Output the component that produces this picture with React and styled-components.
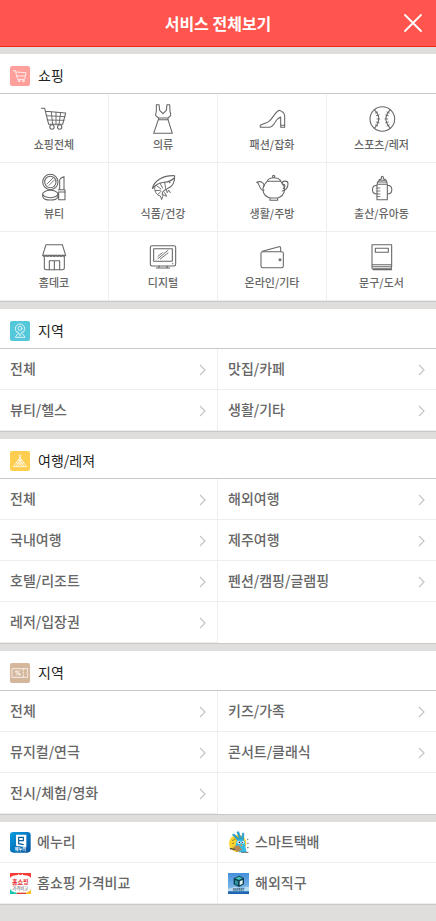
import React from "react";
import styled, { createGlobalStyle } from "styled-components";

const GlobalStyle = createGlobalStyle`
  * { box-sizing: border-box; }
  body {
    margin: 0;
    background: #dfdedc;
    color: #666;
    font-family: "Noto Sans CJK KR", "Noto Sans", sans-serif;
    font-size: 14px;
    font-weight: 500;
  }
  ul { list-style: none; margin: 0; padding: 0; }
  a { color: inherit; text-decoration: none; }
  svg { display: block; flex: none; overflow: visible; }
`;

const Header = styled.header`
  display: grid;
  grid-template-columns: 46px 1fr 46px;
  height: 47px;
  background: #ff554e;
  border-bottom: 1px solid #f0281e;
`;

const Title = styled.h1`
  grid-column: 2;
  margin: 0;
  font-size: 16px;
  line-height: 46px;
  font-weight: 700;
  color: #fff;
  text-align: center;
`;

const CloseButton = styled.button`
  display: flex;
  align-items: center;
  justify-content: center;
  border: 0;
  padding: 0;
  background: none;
  cursor: pointer;
`;

const Sections = styled.main`
  display: flex;
  flex-direction: column;
  gap: 7px;
  padding: 7px 0 16px;
`;

const Section = styled.section`
  background: #fff;
  border-bottom: 1px solid #c9c8c7;
`;

const SectionHead = styled.div`
  display: flex;
  align-items: flex-start;
  gap: 8px;
  padding: 12px 10px 7px;
  border-bottom: 1px solid #c9c9c9;
`;

const SectionTitle = styled.h2`
  margin: 0;
  font-size: 14px;
  line-height: 18px;
  font-weight: 400;
  color: #222;
`;

const Badge = styled.span`
  width: 20px;
  height: 20px;
  border-radius: 2px;
  background: ${(p) => p.$color};
`;

const TileGrid = styled.ul`
  display: grid;
  grid-template-columns: repeat(4, 1fr);
`;

const TileItem = styled.li`
  border-bottom: 1px solid #eee;
  border-right: 1px solid #eee;
  &:nth-child(4n) { border-right: 0; }
`;

const TileLink = styled.a`
  display: flex;
  flex-direction: column;
  align-items: center;
  padding: 9px 0 8px;
  font-size: 11px;
  line-height: 19px;
`;

const LinkGrid = styled.ul`
  display: grid;
  grid-template-columns: repeat(2, 1fr);
`;

const LinkItem = styled.li`
  border-bottom: 1px solid #eee;
  &:nth-child(odd) { border-right: 1px solid #eee; }
`;

const RowLink = styled.a`
  display: flex;
  align-items: flex-start;
  justify-content: space-between;
  padding: 10px 11px 10px 10px;
  line-height: 18px;
`;

const RowArrow = styled.span`
  padding: 5px 0 3px;
`;

const AppLink = styled(RowLink)`
  justify-content: flex-start;
  gap: 6px;
  padding-bottom: 9px;
`;

const TileIcon = ({ children }) => (
  <svg width="30" height="32" viewBox="0 0 90 96" fill="none" stroke="#666" strokeWidth="3.2" strokeLinejoin="round" strokeLinecap="round" aria-hidden="true">
    {children}
  </svg>
);

const tileIcons = {
  cart: (
    <>
      <path d="M7 16h10l12 48h42l9-34-60-5" />
      <path d="M37 27l4 37M51 28v36M65 29l-5 35M22 38l56 3M25 51l50 1" strokeWidth="2.8" />
      <circle cx="39" cy="72" r="6.5" />
      <circle cx="62" cy="72" r="6.5" />
    </>
  ),
  dress: (
    <path d="M25 5h8l2 17 10 10 10-10 2-17h8l1 18c0 6 3 10 2 15l-8 7H32l-9-7c-1-5 2-9 2-15zM31 50h30M32 45v5M60 45v5M31 50L17 91h56L60 50" />
  ),
  shoe: (
    <path d="M10 67c12-6 19-7 25-11 11-7 17-26 31-34 10 3 16 7 17 16v35H71V42c-8 3-14 11-18 18-5 8-10 13-17 13H10zM71 67h11" />
  ),
  ball: (
    <>
      <circle cx="46" cy="48" r="37" />
      <path d="M22 20c17 18 17 38 0 56M70 20c-17 18-17 38 0 56" />
      <path d="M25 30l7-3M28 38l8-2M30 48h8M28 57l8 2M25 66l7 3M67 30l-7-3M64 38l-8-2M62 48h-8M64 57l-8 2M67 66l-7 3" strokeWidth="2.6" />
    </>
  ),
  beauty: (
    <>
      <circle cx="34" cy="30" r="23" />
      <circle cx="34" cy="30" r="17" />
      <path d="M24 36l17-17M30 40l16-16" strokeWidth="2.6" />
      <ellipse cx="34" cy="66" rx="23" ry="11" />
      <path d="M11 67v6c3 15 43 15 46 0v-6M62 53V25c0-6 4-8 13-11v39M58 53h20v30H59V59M59 60h20" />
    </>
  ),
  shrimp: (
    <>
      <path d="M13 49C19 25 47 9 80 11c1 18-7 33-22 39-12 5-17 10-15 19M14 49c6-9 20-16 35-18 11-1 22-5 30-13" />
      <path d="M21 43c-4 14 5 27 16 29l4 11 5-15 10 5-6-11M25 40l14 11M36 34l8 14M50 31l3 18M22 56l15-1M29 68l10-10M54 53l4 9 4-8 5 8" strokeWidth="2.8" />
      <circle cx="65" cy="31" r="1" />
    </>
  ),
  teapot: (
    <>
      <path d="M31 28c-19 16-18 42 8 50h23c25-8 26-34 9-50zM39 78v7h23v-7M30 28c7-14 34-14 42 0" />
      <circle cx="50" cy="13" r="3.5" />
      <path d="M21 55C5 56 10 34-1 31c11-5 21-1 23 11M75 34c1-9 18-9 18 1 0 15-9 20-17 22M76 38c9-3 11 4 3 12" />
    </>
  ),
  bottle: (
    <>
      <path d="M30 37h31v46H30zM31 37v-7h29v7M34 30c1-7 6-9 9-9v-5c0-4 6-4 6 0v5c4 0 9 2 10 9M61 40c18 0 18 26 0 26M30 40c-18 0-18 26 0 26" />
      <path d="M30 48h9M30 57h9M30 66h9M30 74h9M38 25h16" strokeWidth="2.6" />
    </>
  ),
  shop: (
    <>
      <path d="M21 11h49l10 32H11zM11 43q5 7 10 0 5 7 10 0 5 7 10 0 5 7 10 0 5 7 10 0 5 7 10 0 5 7 9 0M16 48v33q0 5 5 5h50q5 0 5-5V48" />
      <path d="M31 86V59h31v27M46 59v27" />
    </>
  ),
  monitor: (
    <>
      <rect x="7" y="14" width="76" height="61" rx="5" />
      <rect x="17" y="23" width="56" height="38" />
      <path d="M30 53l30-25M37 54l23-18M30 46l13-11" strokeWidth="2.8" />
      <path d="M34 75l-3 6h-6M56 75l3 6h6M26 81h38M73 68h2" />
    </>
  ),
  wallet: (
    <>
      <rect x="12" y="32" width="67" height="48" rx="5" />
      <path d="M16 31l50-14q5-1 5 4v10" />
      <circle cx="69" cy="56" r="3" />
    </>
  ),
  book: (
    <>
      <path d="M15 11h59v66H15zM15 71h59M15 77v5l4 4h55M20 83h53v-6" />
      <path d="M25 22h39v12H25z" />
    </>
  ),
};

const BadgeSvg = ({ children }) => (
  <svg width="20" height="20" viewBox="0 0 60 60" fill="none" stroke="#fff" strokeWidth="2.6" strokeLinejoin="round" strokeLinecap="round" opacity="0.9" aria-hidden="true">
    {children}
  </svg>
);

const badgeIcons = {
  cart: (
    <>
      <path d="M10 14h6l7 26h21l4-20-30-2M20 30h26" />
      <circle cx="27" cy="45" r="2.5" />
      <circle cx="40" cy="45" r="2.5" />
    </>
  ),
  pin: (
    <>
      <path d="M30 43C22 36 16 30 16 23a14 14 0 0 1 28 0c0 7-6 13-14 20zM22 40l-6 9h29l-6-9" />
      <circle cx="30" cy="22" r="6" />
      <path d="M22 32l5 5M38 32l-5 5" />
    </>
  ),
  tent: (
    <path d="M27 12l5 6-22 29h40L29 18l4-6M30 19v10M24 28h12M20 36h20M30 29L18 46M30 29l12 17M25 46l5-9 5 9" strokeWidth="2.6" />
  ),
  ticket: (
    <>
      <path d="M7 17h46v8q-5 5 0 10v8H7zM40 18v4m0 5v4m0 5v5" />
      <circle cx="19" cy="26" r="3" />
      <circle cx="28" cy="34" r="3" />
      <path d="M29 23L18 37" />
    </>
  ),
};

const AppSvg = ({ children }) => (
  <svg width="21" height="21" viewBox="0 0 63 63" aria-hidden="true">{children}</svg>
);

const appIcons = {
  enuri: (
    <AppSvg>
      <defs>
        <linearGradient id="enuriBlue" x1="0" y1="0" x2="1" y2="1">
          <stop offset="0" stopColor="#0a9de2" />
          <stop offset="1" stopColor="#03529c" />
        </linearGradient>
      </defs>
      <rect width="62" height="62" rx="10" fill="url(#enuriBlue)" />
      <path d="M18 8h31v38l-31-5z" fill="#fff" />
      <path d="M26 16h14v10H26zM26 26v9l15 3" fill="none" stroke="#075f9f" strokeWidth="3.5" />
      <text x="31" y="58" fontSize="12" fontWeight="700" textAnchor="middle" fill="#fff">에누리</text>
    </AppSvg>
  ),
  homeShopping: (
    <AppSvg>
      <path d="M0 0h63v63H0z" fill="#fff" />
      <path d="M0 0h63v15Q58 5 31 6 5 5 0 15z" fill="#f83b35" />
      <path d="M0 48q5 9 20 11v4H0z" fill="#16c7b0" />
      <path d="M20 59h28v4H20z" fill="#e53a2e" />
      <path d="M48 59q11-2 15-10v14H48z" fill="#ffbe20" />
      <circle cx="26" cy="5" r="2" fill="#fff" />
      <circle cx="37" cy="5" r="2" fill="#fff" />
      <text x="31" y="34" fontSize="18" fontWeight="700" textAnchor="middle" fill="#e5262a">홈쇼핑</text>
      <text x="31" y="50" fontSize="13" fontWeight="400" textAnchor="middle" fill="#555">가격비교</text>
    </AppSvg>
  ),
  delivery: (
    <AppSvg>
      <circle cx="29" cy="34" r="26" fill="#ffd42c" />
      <path d="M33 29L13 8l5-2 17 16L27 0l5-1 8 21 4-17 4 1-2 23z" fill="#20a7dc" stroke="#167fb4" strokeWidth="1.5" />
      <path d="M26 26q13-9 25 2l1 16 4 17H33L22 42z" fill="#35bbea" />
      <circle cx="33" cy="31" r="5" fill="#fff" />
      <circle cx="45" cy="31" r="4" fill="#fff" />
      <circle cx="34" cy="31" r="2.5" fill="#222" />
      <circle cx="44" cy="31" r="2" fill="#222" />
      <path d="M37 37l7 1-4 6z" fill="#f49b23" />
      <path d="M15 44l17-4 10 14-16 6z" fill="#b98752" />
      <path d="M5 47l17 3-1 5-15-3z" fill="#5a5140" />
      <path d="M12 26l11-5M12 35l6-2" stroke="#9b8530" strokeWidth="3" />
      <path d="M57 22h4M58 34h4M57 47h5M39 61h22" stroke="#555" strokeWidth="2.5" />
    </AppSvg>
  ),
  overseas: (
    <AppSvg>
      <defs>
        <linearGradient id="skyBlue" x1="0" y1="0" x2="0" y2="1">
          <stop offset="0" stopColor="#438fdc" />
          <stop offset="1" stopColor="#91c7ed" />
        </linearGradient>
      </defs>
      <path d="M0 0h63v63H0z" fill="url(#skyBlue)" />
      <path d="M0 47l18-5 25 2 20-4v15H0z" fill="#b6dcef" />
      <path d="M0 55h63v8H0z" fill="#1d65ae" />
      <path d="M17 16l16-8 15 7v19l-15 8-16-8z" fill="#103d50" />
      <path d="M21 16l12-5 11 5-11 5z" fill="#40c1bc" />
      <path d="M21 21l9 4v12l-9-5z" fill="#2899a5" />
      <path d="M35 25l9-4v11l-9 5z" fill="#dff4f4" />
      <text x="32" y="54" fontSize="9" fontWeight="700" textAnchor="middle" fill="#123b60">EXPERT</text>
    </AppSvg>
  ),
};

const tiles = [
  ["쇼핑전체", "cart"], ["의류", "dress"], ["패션/잡화", "shoe"], ["스포츠/레저", "ball"],
  ["뷰티", "beauty"], ["식품/건강", "shrimp"], ["생활/주방", "teapot"], ["출산/유아동", "bottle"],
  ["홈데코", "shop"], ["디지털", "monitor"], ["온라인/기타", "wallet"], ["문구/도서", "book"],
];

const linkSections = [
  { title: "지역", icon: "pin", color: "#55c7da", links: ["전체", "맛집/카페", "뷰티/헬스", "생활/기타"] },
  {
    title: "여행/레져", icon: "tent", color: "#ffcd50",
    links: ["전체", "해외여행", "국내여행", "제주여행", "호텔/리조트", "펜션/캠핑/글램핑", "레저/입장권"],
  },
  {
    title: "지역", icon: "ticket", color: "#d5b79c",
    links: ["전체", "키즈/가족", "뮤지컬/연극", "콘서트/클래식", "전시/체험/영화"],
  },
];

const apps = [
  ["에누리", "enuri"], ["스마트택배", "delivery"],
  ["홈쇼핑 가격비교", "homeShopping"], ["해외직구", "overseas"],
];

const Chevron = () => (
  <svg width="7" height="12" viewBox="0 0 7 12" fill="none" stroke="#c4c4c4" strokeWidth="1.2" aria-hidden="true">
    <path d="M1 1l5 5-5 5" />
  </svg>
);

const Heading = ({ title, icon, color }) => (
  <SectionHead>
    <Badge $color={color}><BadgeSvg>{badgeIcons[icon]}</BadgeSvg></Badge>
    <SectionTitle>{title}</SectionTitle>
  </SectionHead>
);

export default function App() {
  return (
    <>
      <GlobalStyle />
      <Header>
        <Title>서비스 전체보기</Title>
        <CloseButton type="button" aria-label="닫기">
          <svg width="18" height="18" viewBox="0 0 18 18" stroke="#fff" strokeWidth="1.8" strokeLinecap="round">
            <path d="M1 1l16 16M17 1L1 17" />
          </svg>
        </CloseButton>
      </Header>
      <Sections>
        <Section>
          <Heading title="쇼핑" icon="cart" color="#ff9f9b" />
          <TileGrid>
            {tiles.map(([label, icon]) => (
              <TileItem key={label}>
                <TileLink href="#">
                  <TileIcon>{tileIcons[icon]}</TileIcon>
                  {label}
                </TileLink>
              </TileItem>
            ))}
          </TileGrid>
        </Section>
        {linkSections.map(({ title, icon, color, links }) => (
          <Section key={icon}>
            <Heading title={title} icon={icon} color={color} />
            <LinkGrid>
              {links.map((label) => (
                <LinkItem key={label}>
                  <RowLink href="#">{label}<RowArrow><Chevron /></RowArrow></RowLink>
                </LinkItem>
              ))}
            </LinkGrid>
          </Section>
        ))}
        <Section>
          <LinkGrid>
            {apps.map(([label, icon]) => (
              <LinkItem key={label}>
                <AppLink href="#">{appIcons[icon]}{label}</AppLink>
              </LinkItem>
            ))}
          </LinkGrid>
        </Section>
      </Sections>
    </>
  );
}
